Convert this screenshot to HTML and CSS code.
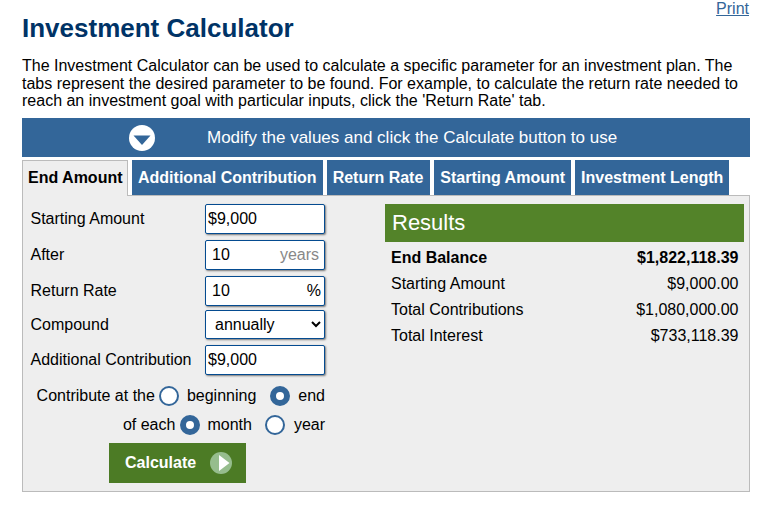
FILE: index.html
```html
<!DOCTYPE html>
<html lang="en">
<head>
<meta charset="utf-8">
<title>Investment Calculator</title>
<link rel="stylesheet" href="styles.css">
</head>
<body>
<main class="page">
  <div class="print-row"><a class="print" href="#">Print</a></div>
  <h1 class="title">Investment Calculator</h1>
  <p class="intro">The Investment Calculator can be used to calculate a specific parameter for an investment plan. The tabs represent the desired parameter to be found. For example, to calculate the return rate needed to reach an investment goal with particular inputs, click the 'Return Rate' tab.</p>
  <div class="banner">
    <svg class="banner-icon" width="26" height="26" viewBox="0 0 26 26"><circle cx="13" cy="13" r="13" fill="#fff"/><path d="M4.500 10.500h17L13 20z" fill="#336699"/></svg>
    <span class="banner-text">Modify the values and click the Calculate button to use</span>
  </div>
  <nav class="tabs">
    <a class="tab active">End Amount</a>
    <a class="tab">Additional Contribution</a>
    <a class="tab tab-rate">Return Rate</a>
    <a class="tab">Starting Amount</a>
    <a class="tab">Investment Length</a>
  </nav>
  <section class="panel">
    <form class="form">
      <div class="row r1"><label>Starting Amount</label><div class="field lead">$9,000</div></div>
      <div class="row r2"><label>After</label><div class="field pad"><span>10</span><span class="unit">years</span></div></div>
      <div class="row r3"><label>Return Rate</label><div class="field pad"><span>10</span><span class="pct">%</span></div></div>
      <div class="row r4"><label>Compound</label><select class="select"><option>annually</option></select></div>
      <div class="row r5"><label>Additional Contribution</label><div class="field lead">$9,000</div></div>
      <div class="choice c1">
        <span>Contribute at the</span><i class="radio"></i><span class="g1">beginning</span><i class="radio on g2"></i><span class="g3">end</span>
      </div>
      <div class="choice c2">
        <span>of each</span><i class="radio on"></i><span class="g1">month</span><i class="radio g2"></i><span class="g3">year</span>
      </div>
      <button class="calc" type="button">Calculate
        <svg class="play" width="22" height="22" viewBox="0 0 22 22"><circle cx="11" cy="11" r="11" fill="#96bd8d"/><path d="M9 3 19.500 11 9 19z" fill="#fff"/></svg>
      </button>
    </form>
    <div class="results">
      <h2 class="results-title">Results</h2>
      <div class="line total"><span>End Balance</span><span>$1,822,118.39</span></div>
      <div class="line"><span>Starting Amount</span><span>$9,000.00</span></div>
      <div class="line"><span>Total Contributions</span><span>$1,080,000.00</span></div>
      <div class="line"><span>Total Interest</span><span>$733,118.39</span></div>
    </div>
  </section>
</main>
</body>
</html>
```
FILE: styles.css
```css
* { box-sizing: border-box; }
html, body { margin: 0; background: #fff; }
body { font-family: "Liberation Sans", Arial, sans-serif; font-size: 16px; color: #000; overflow: hidden; }
.page { width: 761px; height: 512px; padding: 0 11px 0 22px; position: relative; }
.print-row { position: absolute; top: 0; right: 12px; line-height: 18px; }
.print { color: #336699; text-decoration: underline; }
.title { margin: 0; padding-top: 12px; font-size: 26px; line-height: 32px; font-weight: 700; color: #003366; }
.intro { margin: 13px 0 0; line-height: 17.5px; height: 53px; width: 728px; }
.banner { margin-top: 8px; height: 39px; background: #336699; color: #fff; display: flex; align-items: center; padding-left: 107px; font-size: 17px; }
.banner-icon { flex: none; }
.banner-text { margin-left: 52px; }
.tabs { display: flex; gap: 4px; margin-top: 3px; height: 35px; }
.tab { background: #336699; color: #fff; font-weight: 700; padding: 0 6px; line-height: 35px; display: block; white-space: nowrap; }
.tab-rate { padding-right: 7px; }
.tab.active { background: #eee; color: #000; border: 1px solid #bbb; border-bottom: 0; line-height: 33px; padding: 0 5px; position: relative; height: 36px; z-index: 1; width: 106px; }
.panel { height: 297px; width: 728px; background: #eee; border: 1px solid #bbb; display: flex; }
.form { width: 303px; flex: none; padding-left: 7.500px; }
.row { display: flex; justify-content: space-between; align-items: center; width: 294.500px; }
.r1 { margin-top: 8px; }
.r2 { margin-top: 6px; }
.r3 { margin-top: 6px; }
.r4 { margin-top: 4px; }
.r5 { margin-top: 6px; }
.field { width: 120px; height: 30px; background: #fff; border: 1px solid #044b90; border-radius: 2px; box-shadow: 1px 1px 2px #777; display: flex; align-items: center; justify-content: space-between; color: #000; }
.lead { padding-left: 2px; }
.pad { padding: 0 5px 0 6px; }
.unit { color: #888; }
.pct { margin-right: -2px; }
.select { width: 120px; height: 29px; background: #fff; border: 1px solid #044b90; border-radius: 2px; box-shadow: 1px 1px 2px #777; font: 16px "Liberation Sans", Arial, sans-serif; color: #000; padding-left: 5px; }
.choice { width: 294.500px; display: flex; align-items: center; justify-content: flex-end; height: 20px; }
.c1 { margin-top: 11px; }
.c2 { margin-top: 9px; }
.radio { width: 20px; height: 20px; border-radius: 50%; background: #fff; border: 2px solid #336699; display: block; flex: none; margin-left: 4px; }
.radio.on { border: 6px solid #336699; }
.g1 { margin-left: 8px; }
.c1 .g2 { margin-left: 14px; }
.c2 .radio.on { margin-left: 5px; }
.c2 .g1 { margin-left: 7px; }
.c2 .g2 { margin-left: 13px; }
.g3 { margin-left: 8px; }
.c2 .g3 { margin-left: 9px; }
.calc { display: flex; align-items: center; margin: 8px 0 0 78.500px; width: 137px; height: 40px; background: #4c7b25; color: #fff; border: 0; font: 700 16px "Liberation Sans", Arial, sans-serif; padding: 0 0 1px 16px; }
.play { margin-left: 14px; margin-top: 1px; }
.results { width: 359px; margin-left: 59px; padding-top: 8px; flex: none; }
.results-title { margin: 0; height: 38px; background: #538329; color: #fff; font-size: 22px; font-weight: 400; line-height: 38px; padding-left: 7px; }
.line { display: flex; justify-content: space-between; padding: 0 5.500px 0 6px; height: 26px; line-height: 28px; }
.total { font-weight: 700; margin-top: 2px; }
```
